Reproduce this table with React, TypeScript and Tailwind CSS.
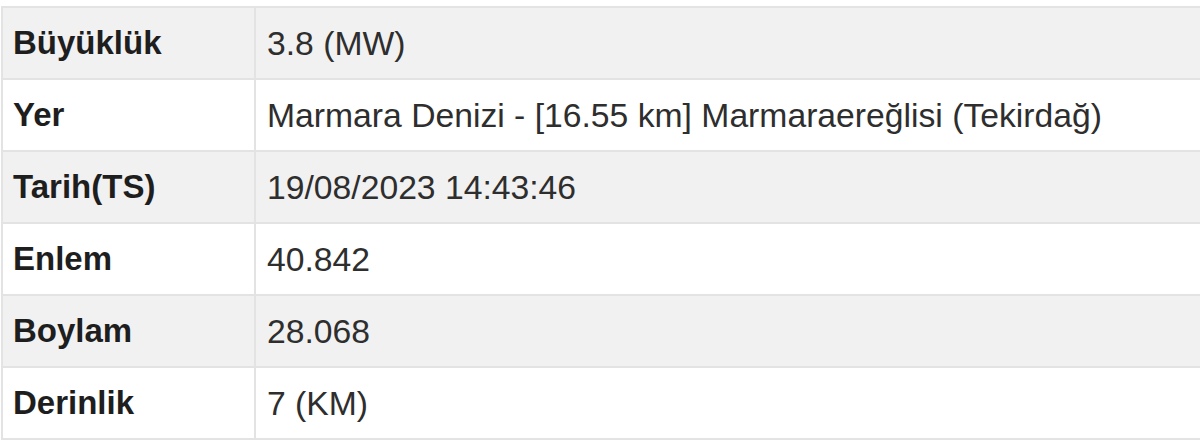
import React from "react";

const rows: [string, string][] = [
  ["Büyüklük", "3.8 (MW)"],
  ["Yer", "Marmara Denizi - [16.55 km] Marmaraereğlisi (Tekirdağ)"],
  ["Tarih(TS)", "19/08/2023 14:43:46"],
  ["Enlem", "40.842"],
  ["Boylam", "28.068"],
  ["Derinlik", "7 (KM)"],
];

export default function App() {
  return (
    <div className="w-[1200px] h-[443px] bg-white overflow-hidden pt-[6px] pl-[1px]" style={{ fontFamily: '"Liberation Sans", Arial, sans-serif' }}>
      <div className="w-[1220px] border-t-2 border-l-2 border-[#e3e3e3]">
        {rows.map(([k, v], i) => (
          <div
            key={k}
            className={`flex h-[72px] border-b-2 border-[#e3e3e3] ${i % 2 === 0 ? "bg-[#f1f1f1]" : "bg-white"}`}
          >
            <div className="w-[253px] shrink-0 border-r-2 border-[#e3e3e3] flex items-center pl-[10px] text-[33px] font-bold text-[#1e1e1e]">
              {k}
            </div>
            <div className="flex-1 flex items-center pl-[11px] text-[33.7px] text-[#2e2e2e]">
              {v}
            </div>
          </div>
        ))}
      </div>
    </div>
  );
}
